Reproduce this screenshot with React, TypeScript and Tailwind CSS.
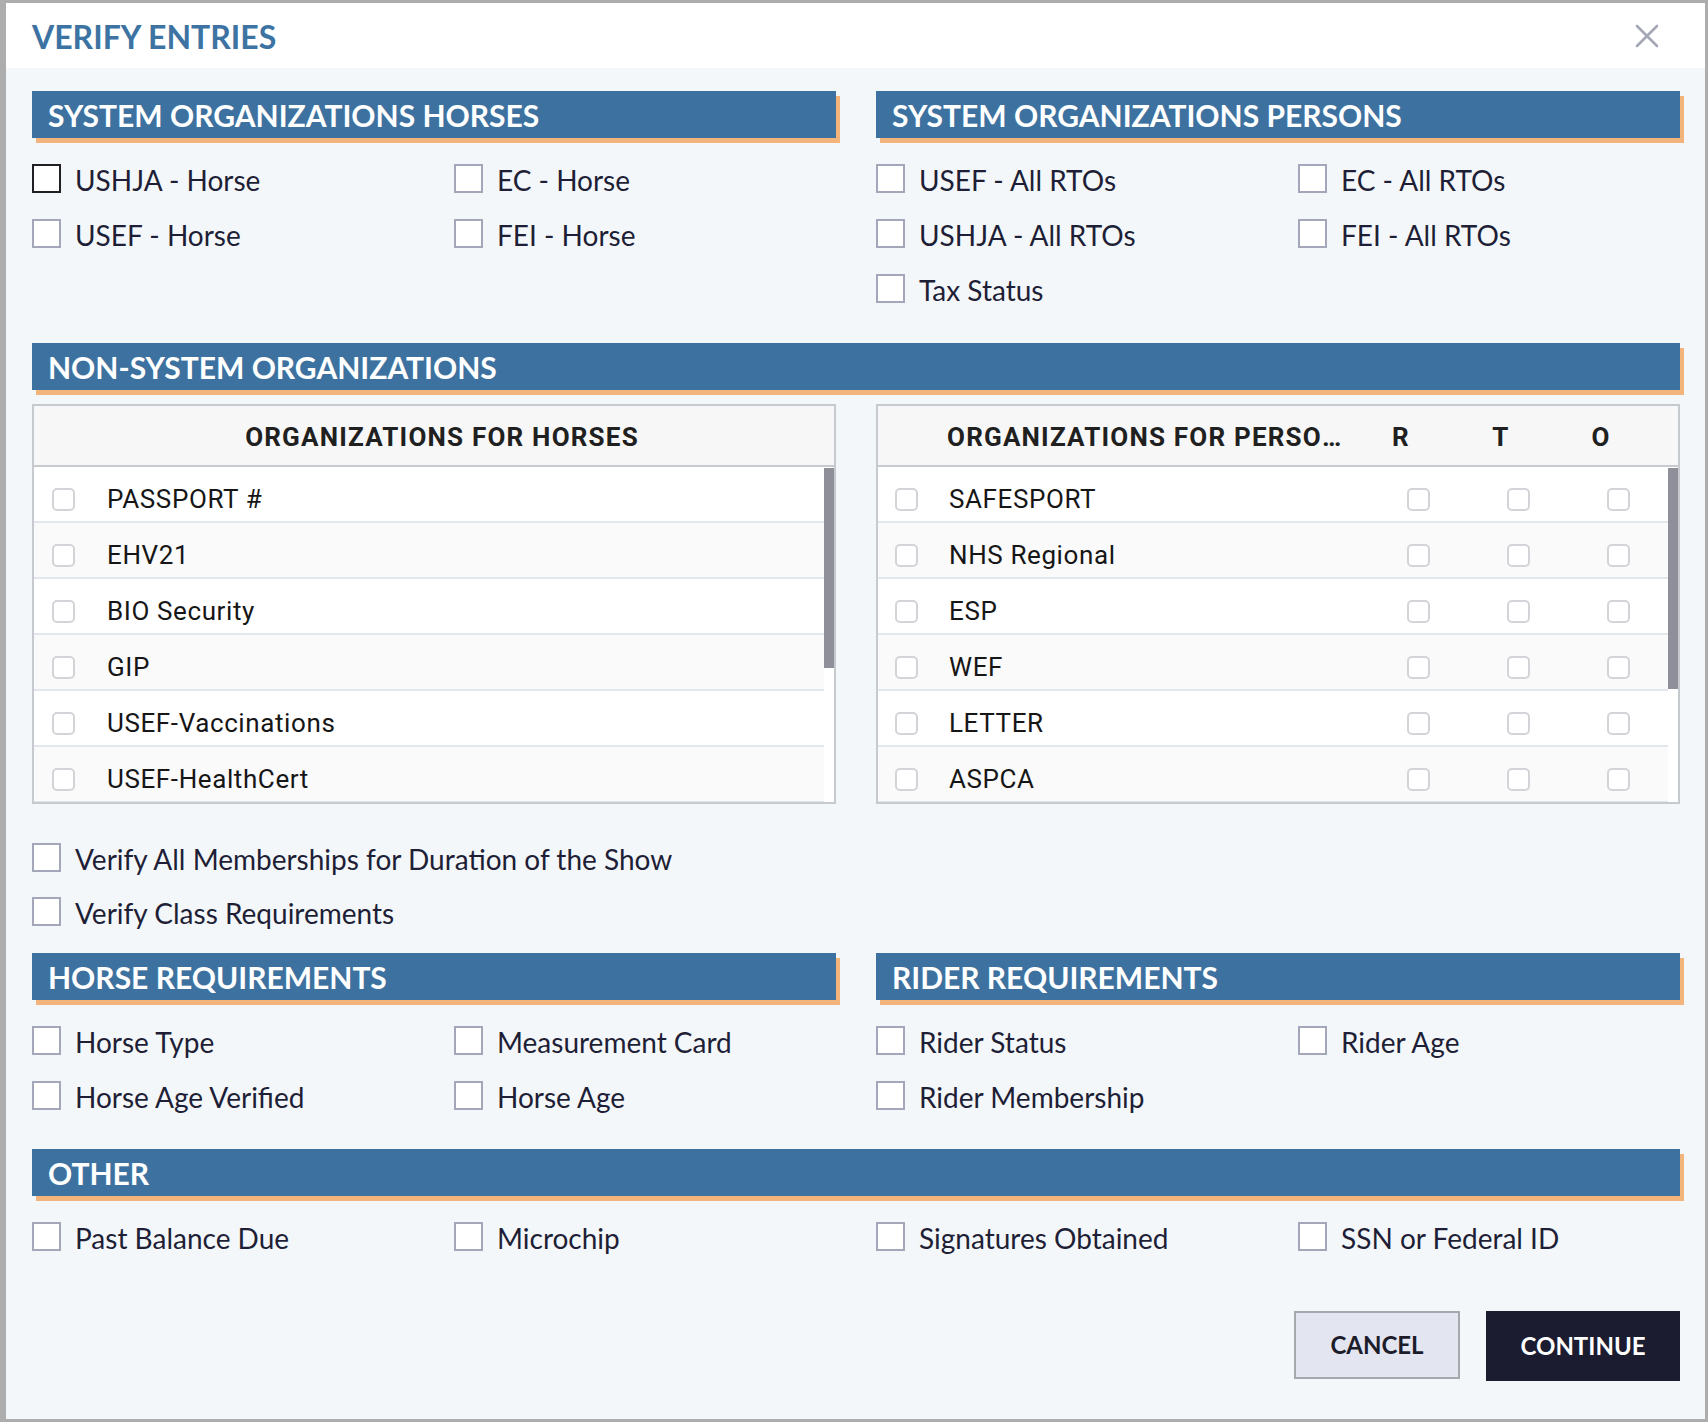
import React from "react";

const horseOrgs = ["PASSPORT #", "EHV21", "BIO Security", "GIP", "USEF-Vaccinations", "USEF-HealthCert"];
const personOrgs = ["SAFESPORT", "NHS Regional", "ESP", "WEF", "LETTER", "ASPCA"];

function Box({ focused = false }: { focused?: boolean }) {
  return (
    <span
      className={`block h-[29px] w-[29px] shrink-0 border-2 bg-white ${
        focused ? "border-[#1f1f24]" : "border-[#a4a7b9]"
      }`}
    />
  );
}

function Check({ label, focused = false }: { label: string; focused?: boolean }) {
  return (
    <label className="flex h-[29px] items-center gap-[14px] text-[28px] text-[#1e1f36]">
      <Box focused={focused} />
      <span className="whitespace-nowrap pt-[2px] leading-[34px]">{label}</span>
    </label>
  );
}

function Bar({ title }: { title: string }) {
  return (
    <div className="flex h-[47px] items-center bg-[#3d72a0] pl-[16px] text-[30px] font-bold text-white shadow-[4px_5px_0_#f3b47c]">
      <span className="pt-[2px]">{title}</span>
    </div>
  );
}

function SmallBox() {
  return <span className="block h-[23px] w-[23px] shrink-0 rounded-[5px] border-2 border-[#d2d4d8] bg-white" />;
}

function HorseTable() {
  return (
    <div className="h-[400px] border-2 border-[#c6c9cd] bg-white font-['Roboto',sans-serif]">
      <div className="flex h-[61px] items-center justify-center border-b-2 border-[#c6c9cd] bg-[#f7f7f7] pl-[16px] pt-[4px] text-[26px] font-bold tracking-[1.2px] text-[#202020]">
        ORGANIZATIONS FOR HORSES
      </div>
      <div className="flex h-[335px]">
        <div className="flex-1 overflow-hidden">
          {horseOrgs.map((o, i) => (
            <div
              key={o}
              className={`flex h-[56px] items-center border-b-2 border-[#e2e6ed] pt-[10px] text-[26px] tracking-[0.6px] text-[#161616] ${
                i % 2 ? "bg-[#fafafa]" : "bg-white"
              }`}
            >
              <div className="w-[73px] pl-[18px]">
                <SmallBox />
              </div>
              <span>{o}</span>
            </div>
          ))}
        </div>
        <div className="w-[10px] pt-[1px]">
          <div className="h-[200px] bg-[#8f8f9a]" />
        </div>
      </div>
    </div>
  );
}

function PersonTable() {
  return (
    <div className="h-[400px] border-2 border-[#c6c9cd] bg-white font-['Roboto',sans-serif]">
      <div className="flex h-[61px] items-center border-b-2 border-[#c6c9cd] bg-[#f7f7f7] pt-[4px] text-[26px] font-bold tracking-[1.2px] text-[#202020]">
        <div className="w-[69px] shrink-0" />
        <div className="min-w-0 flex-1 truncate">ORGANIZATIONS FOR PERSONS</div>
        <div className="w-[100px] shrink-0 text-center">R</div>
        <div className="w-[100px] shrink-0 text-center">T</div>
        <div className="w-[100px] shrink-0 text-center">O</div>
        <div className="w-[27px] shrink-0" />
      </div>
      <div className="flex h-[335px]">
        <div className="flex-1 overflow-hidden">
          {personOrgs.map((o, i) => (
            <div
              key={o}
              className={`flex h-[56px] items-center border-b-2 border-[#e2e6ed] pt-[10px] text-[26px] tracking-[0.6px] text-[#161616] ${
                i % 2 ? "bg-[#fafafa]" : "bg-white"
              }`}
            >
              <div className="w-[71px] shrink-0 pl-[17px]">
                <SmallBox />
              </div>
              <span className="flex-1">{o}</span>
              <div className="flex w-[100px] justify-center">
                <SmallBox />
              </div>
              <div className="flex w-[100px] justify-center">
                <SmallBox />
              </div>
              <div className="flex w-[100px] justify-center">
                <SmallBox />
              </div>
            </div>
          ))}
        </div>
        <div className="w-[10px] pt-[1px]">
          <div className="h-[221px] bg-[#8f8f9a]" />
        </div>
      </div>
    </div>
  );
}

export default function App() {
  return (
    <div className="h-[1422px] w-[1708px] overflow-hidden bg-[#adadad] pl-[6px] pt-[3px] font-['Lato',sans-serif]">
      <div className="h-[1416px] w-[1699px] bg-[#f4f7fa]">
        {/* header */}
        <div className="flex h-[65px] items-center justify-between bg-white pl-[26px] pr-[46px]">
          <h1 className="pt-[2px] text-[32px] font-bold text-[#3c73a2]">VERIFY ENTRIES</h1>
          <svg width="24" height="24" viewBox="0 0 24 24" className="text-[#a4a7b5]">
            <path d="M2 2 L22 22 M22 2 L2 22" stroke="currentColor" strokeWidth="2.6" strokeLinecap="round" />
          </svg>
        </div>

        <div className="pl-[26px] pr-[25px] pt-[23px]">
          {/* system orgs */}
          <div className="grid grid-cols-2 gap-x-[40px]">
            <div>
              <Bar title="SYSTEM ORGANIZATIONS HORSES" />
              <div className="mt-[26px] grid grid-cols-2 gap-x-[40px] gap-y-[26px]">
                <Check label="USHJA - Horse" focused />
                <Check label="EC - Horse" />
                <Check label="USEF - Horse" />
                <Check label="FEI - Horse" />
              </div>
            </div>
            <div>
              <Bar title="SYSTEM ORGANIZATIONS PERSONS" />
              <div className="mt-[26px] grid grid-cols-2 gap-x-[40px] gap-y-[26px]">
                <Check label="USEF - All RTOs" />
                <Check label="EC - All RTOs" />
                <Check label="USHJA - All RTOs" />
                <Check label="FEI - All RTOs" />
                <Check label="Tax Status" />
              </div>
            </div>
          </div>

          {/* non-system */}
          <div className="mt-[40px]">
            <Bar title="NON-SYSTEM ORGANIZATIONS" />
          </div>
          <div className="mt-[14px] grid grid-cols-2 gap-x-[40px]">
            <HorseTable />
            <PersonTable />
          </div>

          <div className="mt-[39px] flex flex-col gap-[25px]">
            <Check label="Verify All Memberships for Duration of the Show" />
            <Check label="Verify Class Requirements" />
          </div>

          {/* requirements */}
          <div className="mt-[27px] grid grid-cols-2 gap-x-[40px]">
            <div>
              <Bar title="HORSE REQUIREMENTS" />
              <div className="mt-[26px] grid grid-cols-2 gap-x-[40px] gap-y-[26px]">
                <Check label="Horse Type" />
                <Check label="Measurement Card" />
                <Check label="Horse Age Verified" />
                <Check label="Horse Age" />
              </div>
            </div>
            <div>
              <Bar title="RIDER REQUIREMENTS" />
              <div className="mt-[26px] grid grid-cols-2 gap-x-[40px] gap-y-[26px]">
                <Check label="Rider Status" />
                <Check label="Rider Age" />
                <Check label="Rider Membership" />
              </div>
            </div>
          </div>

          {/* other */}
          <div className="mt-[39px]">
            <Bar title="OTHER" />
          </div>
          <div className="mt-[26px] grid grid-cols-4 gap-x-[40px]">
            <Check label="Past Balance Due" />
            <Check label="Microchip" />
            <Check label="Signatures Obtained" />
            <Check label="SSN or Federal ID" />
          </div>

          <div className="mt-[60px] flex justify-end gap-[26px]">
            <button className="h-[68px] w-[166px] border-2 border-[#a7a8ae] bg-[#e3e5f1] text-[24px] font-bold text-[#1c1c2a]">
              CANCEL
            </button>
            <button className="h-[70px] w-[194px] bg-[#1c1c30] text-[24px] font-bold text-white">CONTINUE</button>
          </div>
        </div>
      </div>
    </div>
  );
}
